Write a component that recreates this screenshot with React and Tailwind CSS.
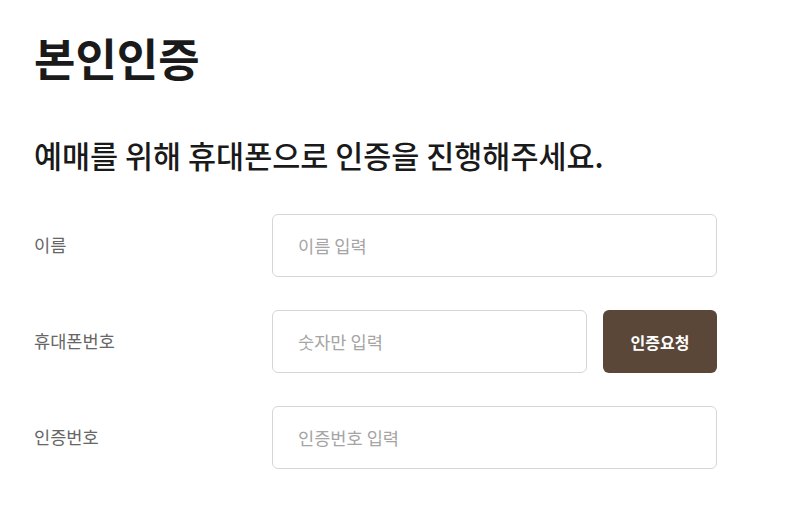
export default function App() {
  const font = { fontFamily: '"Noto Sans CJK KR", "Noto Sans", sans-serif' };

  return (
    <div className="min-h-screen bg-white px-[34px] pt-[30px] text-[#1a1a1a]" style={font}>
      <h1 className="text-[45px] font-bold leading-[56px]">본인인증</h1>

      <h2 className="mt-[51px] text-[30.5px] font-medium leading-[36px]">
        예매를 위해 휴대폰으로 인증을 진행해주세요.
      </h2>

      <div className="mt-[41px] flex w-[683px] flex-col gap-[33px]">
        {/* 이름 */}
        <div className="flex items-center">
          <label className="w-[238px] text-[17.6px] text-[#666]">이름</label>
          <input
            className="h-[63px] flex-1 rounded-[6px] border border-[#d6d6d6] px-[25px] text-[17.6px] outline-none placeholder:text-[#a5a5a5]"
            placeholder="이름 입력"
          />
        </div>

        {/* 휴대폰번호 */}
        <div className="flex items-center">
          <label className="w-[238px] text-[17.6px] text-[#666]">휴대폰번호</label>
          <div className="flex flex-1 gap-[16px]">
            <input
              className="h-[63px] min-w-0 flex-1 rounded-[6px] border border-[#d6d6d6] px-[25px] text-[17.6px] outline-none placeholder:text-[#a5a5a5]"
              placeholder="숫자만 입력"
            />
            <button className="h-[63px] w-[114px] rounded-[6px] bg-[#5b4738] text-[16px] font-bold text-white">
              인증요청
            </button>
          </div>
        </div>

        {/* 인증번호 */}
        <div className="flex items-center">
          <label className="w-[238px] text-[17.6px] text-[#666]">인증번호</label>
          <input
            className="h-[63px] flex-1 rounded-[6px] border border-[#d6d6d6] px-[25px] text-[17.6px] outline-none placeholder:text-[#a5a5a5]"
            placeholder="인증번호 입력"
          />
        </div>
      </div>
    </div>
  );
}
